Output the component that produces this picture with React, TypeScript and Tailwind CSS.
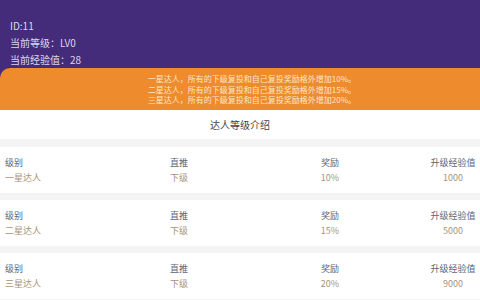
import React from "react";

const levels = [
  { name: "一星达人", push: "下级", reward: "10%", exp: "1000" },
  { name: "二星达人", push: "下级", reward: "15%", exp: "5000" },
  { name: "三星达人", push: "下级", reward: "20%", exp: "9000" },
];

const LevelCard = ({ name, push, reward, exp }: (typeof levels)[number]) => {
  return (
    <div className="bg-white py-[8px] mb-[7px] text-[9px] leading-[15px]">
      <div className="flex text-[#5c6573]">
        <div className="w-[160px] pl-[5px]">级别</div>
        <div className="w-[38px] text-center">直推</div>
        <div className="w-[40px] ml-[112px] text-center">奖励</div>
        <div className="w-[52px] ml-[77px] text-center">升级经验值</div>
      </div>
      <div className="flex text-[#a8937a]">
        <div className="w-[160px] pl-[5px]">{name}</div>
        <div className="w-[38px] text-center">{push}</div>
        <div className="w-[40px] ml-[112px] text-center">{reward}</div>
        <div className="w-[52px] ml-[77px] text-center">{exp}</div>
      </div>
    </div>
  );
};

export default function App() {
  return (
    <div
      className="w-[480px] h-[300px] overflow-hidden bg-[#f4f4f4]"
      style={{ fontFamily: '"Noto Sans CJK SC", "Noto Sans", sans-serif' }}
    >
      <div className="bg-[#452c7a]">
        <div className="pt-[17px] pl-[10px] text-[10px] leading-[17px] text-[#dcd6ea]">
          <p>ID:11</p>
          <p>当前等级：LV0</p>
          <p>当前经验值：28</p>
        </div>
        <div className="bg-[#ed8b2d] rounded-tl-[10px] pt-[6px] pb-[4px] pl-[24px] text-center text-[8px] leading-[10.5px] text-[#fde6c8]">
          <p>一星达人，所有的下级复投和自己复投奖励格外增加10%。</p>
          <p>二星达人，所有的下级复投和自己复投奖励格外增加15%。</p>
          <p>三星达人，所有的下级复投和自己复投奖励格外增加20%。</p>
        </div>
      </div>
      <div className="bg-white h-[29px] flex items-center justify-center text-[10px] text-[#444]">
        达人等级介绍
      </div>
      <div className="pt-[8px]">
        {levels.map((l) => (
          <LevelCard key={l.name} {...l} />
        ))}
      </div>
    </div>
  );
}
